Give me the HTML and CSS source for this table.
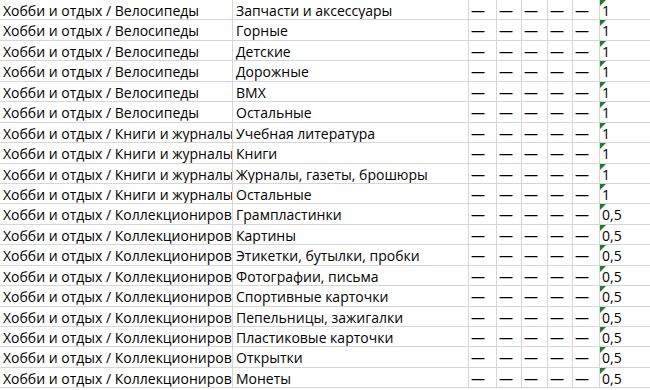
FILE: index.html
```html
<!DOCTYPE html>
<html lang="ru">
<head>
<meta charset="utf-8">
<link rel="stylesheet" href="styles.css">
</head>
<body>
<div class="sheet">
  <div class="row"><div class="c c1">Хобби и отдых / Велосипеды</div><div class="c c2">Запчасти и аксессуары</div><div class="c d">—</div><div class="c d">—</div><div class="c d">—</div><div class="c d">—</div><div class="c d">—</div><div class="c v">1</div></div>
  <div class="row"><div class="c c1">Хобби и отдых / Велосипеды</div><div class="c c2">Горные</div><div class="c d">—</div><div class="c d">—</div><div class="c d">—</div><div class="c d">—</div><div class="c d">—</div><div class="c v">1</div></div>
  <div class="row"><div class="c c1">Хобби и отдых / Велосипеды</div><div class="c c2">Детские</div><div class="c d">—</div><div class="c d">—</div><div class="c d">—</div><div class="c d">—</div><div class="c d">—</div><div class="c v">1</div></div>
  <div class="row"><div class="c c1">Хобби и отдых / Велосипеды</div><div class="c c2">Дорожные</div><div class="c d">—</div><div class="c d">—</div><div class="c d">—</div><div class="c d">—</div><div class="c d">—</div><div class="c v">1</div></div>
  <div class="row"><div class="c c1">Хобби и отдых / Велосипеды</div><div class="c c2">BMX</div><div class="c d">—</div><div class="c d">—</div><div class="c d">—</div><div class="c d">—</div><div class="c d">—</div><div class="c v">1</div></div>
  <div class="row"><div class="c c1">Хобби и отдых / Велосипеды</div><div class="c c2">Остальные</div><div class="c d">—</div><div class="c d">—</div><div class="c d">—</div><div class="c d">—</div><div class="c d">—</div><div class="c v">1</div></div>
  <div class="row"><div class="c c1">Хобби и отдых / Книги и журналы</div><div class="c c2">Учебная литература</div><div class="c d">—</div><div class="c d">—</div><div class="c d">—</div><div class="c d">—</div><div class="c d">—</div><div class="c v">1</div></div>
  <div class="row"><div class="c c1">Хобби и отдых / Книги и журналы</div><div class="c c2">Книги</div><div class="c d">—</div><div class="c d">—</div><div class="c d">—</div><div class="c d">—</div><div class="c d">—</div><div class="c v">1</div></div>
  <div class="row"><div class="c c1">Хобби и отдых / Книги и журналы</div><div class="c c2">Журналы, газеты, брошюры</div><div class="c d">—</div><div class="c d">—</div><div class="c d">—</div><div class="c d">—</div><div class="c d">—</div><div class="c v">1</div></div>
  <div class="row"><div class="c c1">Хобби и отдых / Книги и журналы</div><div class="c c2">Остальные</div><div class="c d">—</div><div class="c d">—</div><div class="c d">—</div><div class="c d">—</div><div class="c d">—</div><div class="c v">1</div></div>
  <div class="row"><div class="c c1">Хобби и отдых / Коллекционирование</div><div class="c c2">Грампластинки</div><div class="c d">—</div><div class="c d">—</div><div class="c d">—</div><div class="c d">—</div><div class="c d">—</div><div class="c v">0,5</div></div>
  <div class="row"><div class="c c1">Хобби и отдых / Коллекционирование</div><div class="c c2">Картины</div><div class="c d">—</div><div class="c d">—</div><div class="c d">—</div><div class="c d">—</div><div class="c d">—</div><div class="c v">0,5</div></div>
  <div class="row"><div class="c c1">Хобби и отдых / Коллекционирование</div><div class="c c2">Этикетки, бутылки, пробки</div><div class="c d">—</div><div class="c d">—</div><div class="c d">—</div><div class="c d">—</div><div class="c d">—</div><div class="c v">0,5</div></div>
  <div class="row"><div class="c c1">Хобби и отдых / Коллекционирование</div><div class="c c2">Фотографии, письма</div><div class="c d">—</div><div class="c d">—</div><div class="c d">—</div><div class="c d">—</div><div class="c d">—</div><div class="c v">0,5</div></div>
  <div class="row"><div class="c c1">Хобби и отдых / Коллекционирование</div><div class="c c2">Спортивные карточки</div><div class="c d">—</div><div class="c d">—</div><div class="c d">—</div><div class="c d">—</div><div class="c d">—</div><div class="c v">0,5</div></div>
  <div class="row"><div class="c c1">Хобби и отдых / Коллекционирование</div><div class="c c2">Пепельницы, зажигалки</div><div class="c d">—</div><div class="c d">—</div><div class="c d">—</div><div class="c d">—</div><div class="c d">—</div><div class="c v">0,5</div></div>
  <div class="row"><div class="c c1">Хобби и отдых / Коллекционирование</div><div class="c c2">Пластиковые карточки</div><div class="c d">—</div><div class="c d">—</div><div class="c d">—</div><div class="c d">—</div><div class="c d">—</div><div class="c v">0,5</div></div>
  <div class="row"><div class="c c1">Хобби и отдых / Коллекционирование</div><div class="c c2">Открытки</div><div class="c d">—</div><div class="c d">—</div><div class="c d">—</div><div class="c d">—</div><div class="c d">—</div><div class="c v">0,5</div></div>
  <div class="row"><div class="c c1">Хобби и отдых / Коллекционирование</div><div class="c c2">Монеты</div><div class="c d">—</div><div class="c d">—</div><div class="c d">—</div><div class="c d">—</div><div class="c d">—</div><div class="c v">0,5</div></div>
</div>
</body>
</html>
```
FILE: styles.css
```css
html, body {
  margin: 0;
  padding: 0;
  background: #ffffff;
}
body {
  width: 650px;
  height: 390px;
  overflow: hidden;
}
.sheet {
  display: flex;
  flex-direction: column;
  font-family: "Open Sans", "Noto Sans", sans-serif;
  font-size: 14px;
  color: #000;
}
.row {
  display: grid;
  grid-template-columns: 233px 236px 28px 25px 26px 25px 27px 1fr;
  height: 20.45px;
  box-sizing: border-box;
  border-bottom: 1px solid #d6d6d6;
}
.c {
  border-right: 1px solid #d6d6d6;
  white-space: nowrap;
  overflow: hidden;
  padding-left: 3px;
  line-height: 21px;
  position: relative;
}
.d {
  padding-left: 2px;
}
.v {
  border-right: none;
  padding-left: 2px;
}
.v::before {
  content: "";
  position: absolute;
  left: 0;
  top: 0;
  border-top: 6px solid #1e7d32;
  border-right: 6px solid transparent;
}
```
